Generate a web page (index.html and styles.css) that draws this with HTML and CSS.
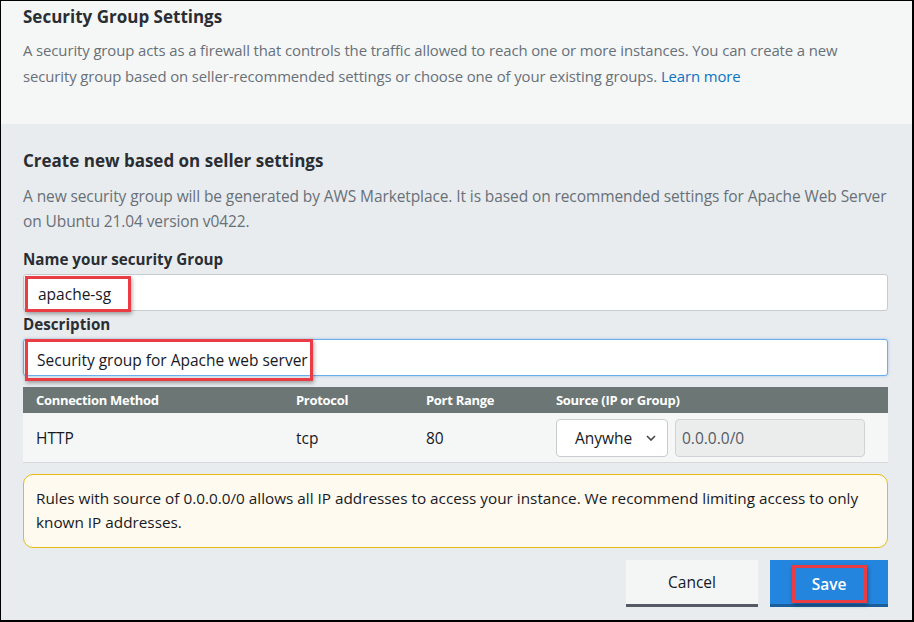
FILE: index.html
```html
<!DOCTYPE html>
<html>
<head>
<meta charset="utf-8">
<link rel="stylesheet" href="styles.css">
</head>
<body>
<div class="frame">
  <section class="intro">
    <h1 class="title">Security Group Settings</h1>
    <p class="desc">A security group acts as a firewall that controls the traffic allowed to reach one or more instances. You can create a new security group based on seller-recommended settings or choose one of your existing groups. <a class="link" href="#">Learn more</a></p>
  </section>
  <section class="create">
    <h2 class="title">Create new based on seller settings</h2>
    <p class="desc">A new security group will be generated by AWS Marketplace. It is based on recommended settings for Apache Web Server on Ubuntu 21.04 version v0422.</p>
    <label class="label">Name your security Group</label>
    <div class="input">
      <span class="hl hl-name">apache-sg</span>
    </div>
    <label class="label label-desc">Description</label>
    <div class="input focus">
      <span class="hl hl-desc">Security group for Apache web server<span class="caret"></span></span>
    </div>
    <div class="table">
      <div class="thead">
        <div class="c1">Connection Method</div>
        <div class="c2">Protocol</div>
        <div class="c3">Port Range</div>
        <div class="c4">Source (IP or Group)</div>
      </div>
      <div class="trow">
        <div class="c1">HTTP</div>
        <div class="c2">tcp</div>
        <div class="c3">80</div>
        <div class="c4 src">
          <div class="select">Anywhe
            <svg class="chev" width="10" height="6" viewBox="0 0 10 6"><path d="M1 1l4 4 4-4" fill="none" stroke="#444" stroke-width="1.6"/></svg>
          </div>
          <div class="ip">0.0.0.0/0</div>
        </div>
      </div>
    </div>
    <div class="warn">Rules with source of 0.0.0.0/0 allows all IP addresses to access your instance. We recommend limiting access to only known IP addresses.</div>
    <div class="actions">
      <button class="btn cancel">Cancel</button>
      <button class="btn save"><span class="hl hl-save">Save</span></button>
    </div>
  </section>
</div>
</body>
</html>
```
FILE: styles.css
```css
* { box-sizing: border-box; }
html, body { margin: 0; padding: 0; }
body {
  width: 914px;
  height: 622px;
  overflow: hidden;
  font-family: "Open Sans", "Liberation Sans", sans-serif;
  background: #e9ecee;
}
.frame {
  width: 914px;
  height: 622px;
  border: 1px solid #000;
  border-right-width: 2px;
  border-bottom-width: 2px;
  display: flex;
  flex-direction: column;
  overflow: hidden;
}
.intro {
  background: #f5f7f7;
  height: 123px;
  padding: 4px 0 0 22px;
}
.title {
  margin: 0;
  font-size: 17px;
  font-weight: 700;
  color: #2a2e33;
  line-height: 24px;
}
.desc {
  margin: 8px 0 0;
  font-size: 15.5px;
  line-height: 26px;
  color: #687078;
  letter-spacing: -0.1px;
}
.intro .desc { font-size: 14.9px; padding-right: 40px; }
.link { color: #0b73c0; text-decoration: none; }
.create {
  flex: 1;
  padding: 25px 24px 0 22px;
  background: #e9ecee;
}
.create .desc { margin-top: 11px; line-height: 25px; }
.label {
  display: block;
  margin-top: 15px;
  font-size: 15.2px;
  font-weight: 700;
  color: #2a2e33;
  line-height: 20px;
}
.label-desc { margin-top: 3px; }
.input {
  margin-top: 5px;
  height: 37px;
  background: #fff;
  border: 1px solid #c8cccf;
  border-radius: 3px;
  display: flex;
  align-items: center;
  padding-left: 1px;
  font-size: 15.5px;
  color: #16191f;
}
.input.focus {
  border-color: #6aaef0;
  box-shadow: 0 0 3px rgba(80,150,230,0.5);
}
.hl {
  position: relative;
  border: 3px solid #ea3c44;
  box-shadow: 1px 2px 4px rgba(0,0,0,0.35);
  display: inline-flex;
  align-items: center;
}
.hl-name { height: 36px; width: 106px; padding-left: 10px; margin-top: 2px; }
.hl-desc { height: 42px; width: 288px; padding-left: 9px; margin-top: 4px; white-space: nowrap; }
.caret {
  display: inline-block;
  width: 1px;
  height: 20px;
  background: #222;
  margin-left: 3px;
}
.table { margin-top: 11px; }
.thead {
  display: flex;
  height: 26px;
  align-items: center;
  background: #6b7675;
  color: #fff;
  font-size: 13px;
  font-weight: 700;
  letter-spacing: -0.3px;
}
.trow {
  display: flex;
  height: 50px;
  align-items: center;
  background: #f5f7f7;
  border-bottom: 1px solid #d5d9da;
  font-size: 15.5px;
  color: #16191f;
}
.c1 { width: 273px; padding-left: 13px; }
.c2 { width: 130px; }
.c3 { width: 130px; }
.c4 { flex: 1; }
.src { display: flex; gap: 7px; }
.select {
  width: 112px;
  height: 38px;
  background: #fff;
  border: 1px solid #c8cccf;
  border-radius: 4px;
  display: flex;
  align-items: center;
  padding-left: 18px;
  gap: 14px;
}
.ip {
  width: 190px;
  height: 38px;
  background: #ebecec;
  border: 1px solid #d0d3d5;
  border-radius: 4px;
  display: flex;
  align-items: center;
  padding-left: 6px;
  color: #545b64;
}
.warn {
  margin-top: 11px;
  height: 74px;
  background: #fffaef;
  border: 1px solid #e8b913;
  border-radius: 10px;
  padding: 11px 12px;
  font-size: 15.3px;
  line-height: 24px;
  color: #16191f;
}
.actions {
  margin-top: 12px;
  display: flex;
  justify-content: flex-end;
  gap: 12px;
}
.btn {
  font-family: inherit;
  height: 47px;
  font-size: 15.5px;
  border: none;
  padding: 0;
  display: flex;
  align-items: center;
  justify-content: center;
}
.cancel {
  width: 132px;
  background: #f4f6f6;
  color: #16191f;
  border-bottom: 3px solid #545b64;
}
.save {
  width: 118px;
  background: #2385dd;
  color: #fff;
  font-weight: 600;
  border-bottom: 3px solid #1a5e9c;
}
.hl-save { width: 75px; height: 38px; justify-content: center; margin-top: 4px; }
```
